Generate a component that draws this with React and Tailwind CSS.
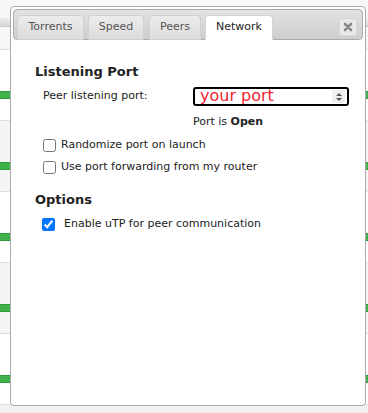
import React from "react";

const rows = [
  { bg: "bg-white" },
  { bg: "bg-[#f5f5f5]" },
  { bg: "bg-white" },
  { bg: "bg-[#f5f5f5]" },
  { bg: "bg-white" },
];

const tabs = [
  { name: "Torrents", w: "w-[67px]" },
  { name: "Speed", w: "w-[56px] ml-[0px]" },
  { name: "Peers", w: "w-[52px] ml-[1px]" },
  { name: "Network", w: "w-[68px]" },
];

const SpinIcon = () => (
  <svg width="8" height="10" viewBox="0 0 8 10">
    <path d="M4 1 L7 4 L1 4 Z" fill="#555" />
    <path d="M4 9 L7 6 L1 6 Z" fill="#555" />
  </svg>
);

const App = () => {
  return (
    <div
      className="relative w-[368px] h-[413px] overflow-hidden bg-[#f5f5f5] text-[#222]"
      style={{ fontFamily: '"DejaVu Sans", Verdana, sans-serif' }}
    >
      {/* torrent list behind the dialog */}
      <div className="flex flex-col">
        <div className="h-[50px] border-b border-[#ddd] bg-[#f7f7f7] pt-[18px]">
          <div className="h-[9px] bg-gradient-to-b from-[#eee] to-[#d6d6d6] border-b border-[#ccc]" />
        </div>
        {rows.map((r, i) => (
          <div key={i} className={`h-[71px] border-b border-[#ddd] ${r.bg} pt-[41px]`}>
            <div className="h-[8px] bg-[#3fb24a] border-y border-[#2e9a39]" />
          </div>
        ))}
        <div className="h-[20px] bg-[#f2f2f2]" />
      </div>

      {/* preferences dialog */}
      <div className="absolute left-[10px] top-[6px] w-[356px] h-[400px] bg-white border border-[#aaa] rounded-[4px] p-[2px] flex flex-col">
        {/* tab header */}
        <div className="h-[31px] rounded-[4px] border border-[#aaa] bg-gradient-to-b from-[#e2e2e2] to-[#cdcdcd] flex items-end pl-[3px] pr-[5px]">
          <div className="flex gap-[4px] items-end -mb-px">
            {tabs.map((t) => {
              const active = t.name === "Network";
              return (
                <div
                  key={t.name}
                  className={
                    active
                      ? `${t.w} h-[25px] flex items-center justify-center text-[11px] bg-white border border-[#d3d3d3] border-b-white rounded-t-[4px] text-[#222]`
                      : `${t.w} h-[25px] flex items-center justify-center text-[11px] bg-gradient-to-b from-[#ececec] to-[#dcdcdc] border border-[#d0d0d0] rounded-t-[4px] text-[#555]`
                  }
                >
                  {t.name}
                </div>
              );
            })}
          </div>
          <div className="ml-auto mb-[3px] w-[18px] h-[18px] rounded-[3px] bg-[#e8e8e8] border border-[#d6d6d6] flex items-center justify-center">
            <svg width="10" height="10" viewBox="0 0 10 10">
              <path d="M2 2 L8 8 M8 2 L2 8" stroke="#888" strokeWidth="2.6" strokeLinecap="round" />
            </svg>
          </div>
        </div>

        {/* body */}
        <div className="pl-[22px] pr-[14px] pt-[24px]">
          <h3 className="text-[13px] font-bold leading-[16px]">Listening Port</h3>

          <div className="flex items-center mt-[7px] pl-[8px]">
            <span className="text-[11px] w-[150px]">Peer listening port:</span>
            <div className="w-[156px] h-[19px] border-2 border-black rounded-[3px] flex items-center pl-[5px] pr-[2px]">
              <span className="text-[16px] leading-[16px] text-[#f02433] -mt-[2px]">your port</span>
              <div className="ml-auto w-[13px] h-[13px] bg-[#efefef] flex items-center justify-center">
                <SpinIcon />
              </div>
            </div>
          </div>

          <div className="pl-[158px] mt-[9px] text-[11px] leading-[14px]">
            Port is <b>Open</b>
          </div>

          <label className="flex items-center mt-[9px] pl-[8px] text-[11px] h-[14px]">
            <input type="checkbox" className="w-[13px] h-[13px] m-0" />
            <span className="ml-[5px]">Randomize port on launch</span>
          </label>
          <label className="flex items-center mt-[8px] pl-[8px] text-[11px] h-[14px]">
            <input type="checkbox" className="w-[13px] h-[13px] m-0" />
            <span className="ml-[5px]">Use port forwarding from my router</span>
          </label>

          <h3 className="text-[13px] font-bold leading-[16px] mt-[18px]">Options</h3>

          <label className="flex items-center mt-[9px] pl-[7px] text-[11px] h-[14px]">
            <input type="checkbox" defaultChecked className="w-[13px] h-[13px] m-0" />
            <span className="ml-[9px]">Enable uTP for peer communication</span>
          </label>
        </div>
      </div>
    </div>
  );
};

export default App;
